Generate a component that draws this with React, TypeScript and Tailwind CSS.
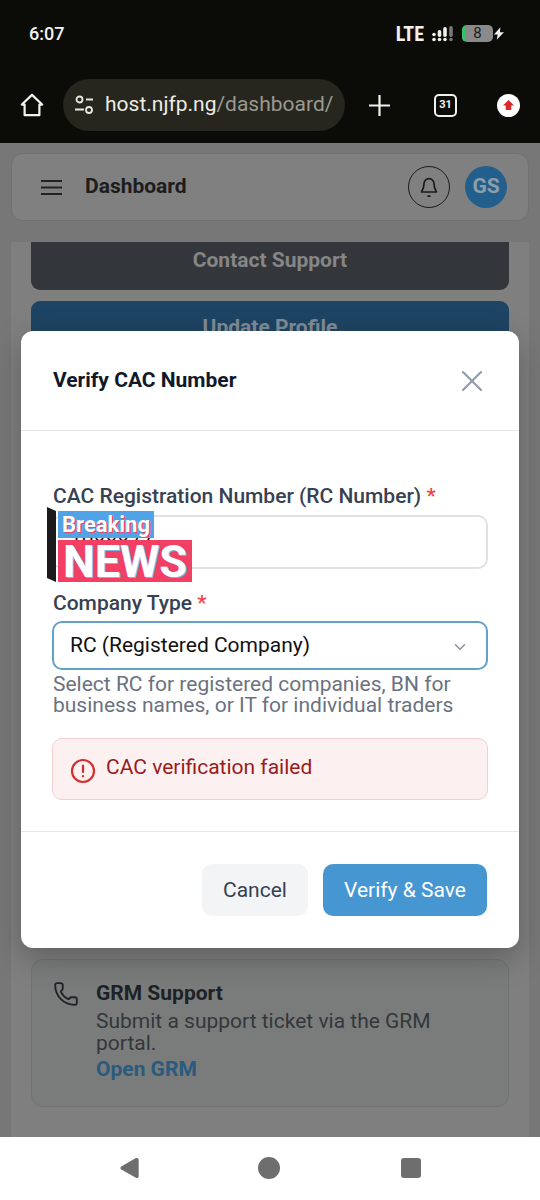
import { ChevronDown, Phone, X } from 'lucide-react'

const font = { fontFamily: 'Roboto, sans-serif' }

function StatusBar() {
  return (
    <div className="flex h-[66px] items-center justify-between pl-[29px] pr-[36px] pt-[1px] text-[#f2f2ec]">
      <span className="text-[18px] font-medium">6:07</span>
      <div className="flex items-center">
        <span className="text-[20px] font-bold [font-family:'Liberation_Sans_Narrow','Roboto_Condensed',Roboto,sans-serif]">LTE</span>
        <svg className="ml-[8px]" width="22" height="16" viewBox="0 0 22 16" fill="#f2f2ec">
          <circle cx="2" cy="13.500" r="1.800" />
          <circle cx="2" cy="8.500" r="1.800" />
          <circle cx="7.500" cy="13.500" r="1.800" />
          <rect x="5.700" y="4" width="3.600" height="7" rx="1.800" />
          <circle cx="13" cy="13.500" r="1.800" />
          <rect x="11.200" y="1" width="3.600" height="10" rx="1.800" />
          <circle cx="19" cy="13.500" r="1.800" fill="#777" />
          <rect x="17.200" y="0" width="3.600" height="11" rx="1.800" fill="#777" />
        </svg>
        <div className="relative ml-[8px] flex h-[17px] w-[31px] items-center justify-center overflow-hidden rounded-[5px] bg-[#8a8a8a]">
          <div className="absolute left-0 top-0 h-full w-[3px] bg-[#35c16a]" />
          <span className="text-[15px] leading-none text-[#1d1d1d]">8</span>
        </div>
        <svg className="ml-[1px]" width="10" height="13" viewBox="0 0 11 14" fill="#f2f2ec">
          <path d="M7 0 0 8h4l-1 6 8-8.500H6.500z" />
        </svg>
      </div>
    </div>
  )
}

function BrowserBar() {
  return (
    <div className="h-[77px] pl-[20px] pt-[13px]">
      <div className="flex h-[52px] items-center">
        <svg className="shrink-0" width="24" height="24" viewBox="0 0 26 26" fill="none" stroke="#f2f2ec" strokeWidth="2.400" strokeLinejoin="round">
          <path d="M2 12.500 13 2l11 10.500h-3V24H5V12.500z" />
        </svg>
        <div className="ml-[19px] flex h-[52px] w-[282px] shrink-0 items-center rounded-full bg-[#26261e] pl-[11px]">
          <svg className="shrink-0" width="20" height="20" viewBox="0 0 20 20" fill="none" stroke="#e8e8e0" strokeWidth="1.800">
            <circle cx="5.500" cy="4.500" r="3" />
            <path d="M12 4.500h7M1 14.500h9" />
            <circle cx="15" cy="15" r="3" />
          </svg>
          <span className="ml-[11px] whitespace-nowrap text-[21px] text-[#ecece4]">
            host.njfp.ng<span className="text-[#9a9a90]">/dashboard/</span>
          </span>
        </div>
        <svg className="ml-[24px] shrink-0" width="21" height="21" viewBox="0 0 21 21" stroke="#f2f2ec" strokeWidth="2.200" fill="none">
          <path d="M0 10.500h21M10.500 0v21" />
        </svg>
        <div className="ml-[44px] flex h-[23px] w-[23px] shrink-0 items-center justify-center rounded-[5px] border-2 border-[#f2f2ec] text-[11px] font-bold text-[#f2f2ec]">31</div>
        <div className="ml-[40px] flex h-[23px] w-[23px] shrink-0 items-center justify-center rounded-full bg-white">
          <svg width="13" height="12" viewBox="0 0 14 13" fill="#d92b2b">
            <path d="M7 1 1 7h3v5h6V7h3z" />
          </svg>
        </div>
      </div>
    </div>
  )
}

function DimmedPage() {
  return (
    <div className="relative flex h-[994px] flex-col overflow-hidden bg-[#777777]">
      <div className="flex flex-1 flex-col px-[11px] pt-[10px]">
        <div className="flex h-[68px] shrink-0 items-center rounded-[12px] border border-[#717171] bg-[#808080] pl-[29px] pr-[21px]">
          <svg width="21" height="17" viewBox="0 0 21 17" stroke="#222" strokeWidth="2" fill="none">
            <path d="M0 2h21M0 8.500h21M0 15h21" />
          </svg>
          <span className="ml-[23px] text-[21px] font-bold text-[#1d1d1d]">Dashboard</span>
          <div className="ml-auto flex h-[42px] w-[42px] items-center justify-center rounded-full border border-[#1c1c1c]">
            <svg width="20" height="22" viewBox="0 0 24 26" fill="none" stroke="#1a1a1a" strokeWidth="2" strokeLinecap="round" strokeLinejoin="round">
              <path d="M6 9a6 6 0 0 1 12 0c0 6 3 9 3 10H3c0-1 3-4 3-10zM11 24h2" />
            </svg>
          </div>
          <div className="ml-[15px] flex h-[42px] w-[42px] items-center justify-center rounded-full bg-[#235f8d] text-[21px] font-bold text-[#8e9ea8]">GS</div>
        </div>
        <div className="mt-[21px] flex flex-1 flex-col overflow-hidden bg-[#7f7f7f] px-[20px]">
          <div className="-mt-[12px] flex h-[60px] shrink-0 items-center justify-center rounded-[9px] bg-[#33363b] pt-[2px] text-[21px] font-bold text-[#868686]">Contact Support</div>
          <div className="mt-[11px] flex h-[54px] shrink-0 items-center justify-center rounded-[9px] bg-[#1e4463] text-[21px] font-bold text-[#7f8c95]">Update Profile</div>
          <div className="h-[604px] shrink-0" />
          <div className="flex h-[148px] shrink-0 rounded-[12px] border border-[#717372] bg-[#7a7c7b] pl-[21px] pt-[21px]">
            <Phone size={26} strokeWidth={1.700} className="shrink-0 text-[#202428]" />
            <div className="ml-[17px] flex flex-col">
              <span className="text-[21px] font-bold leading-[24px] text-[#1e2226]">GRM Support</span>
              <span className="mt-[5px] w-[360px] text-[21px] leading-[22px] text-[#33373b]">Submit a support ticket via the GRM portal.</span>
              <span className="mt-[3px] text-[21px] font-bold leading-[24px] text-[#2a5a7e]">Open GRM</span>
            </div>
          </div>
        </div>
      </div>
    </div>
  )
}

function NavBar() {
  return (
    <div className="flex h-[63px] items-center bg-white pb-[1px] pl-[119px]">
      <svg width="21" height="22" viewBox="0 0 22 24" fill="#6e6e6e">
        <path d="M19 1a2 2 0 0 1 2 2v18a2 2 0 0 1-3 1.700L2 13.700a2 2 0 0 1 0-3.400L18 1.200A2 2 0 0 1 19 1z" />
      </svg>
      <div className="ml-[118px] h-[22px] w-[22px] rounded-full bg-[#6e6e6e]" />
      <div className="ml-[121px] h-[20px] w-[20px] rounded-[3px] bg-[#6e6e6e]" />
    </div>
  )
}

function NewsBadge() {
  return (
    <div className="absolute left-[47px] top-[507px] flex h-[75px]">
      <svg width="11" height="75" viewBox="0 0 11 75" fill="#1c1a1c">
        <path d="M0 0 9 4v71l-9-4z" />
      </svg>
      <div className="flex flex-col items-start">
        <div className="mt-[4px] flex h-[27px] w-[96px] items-center bg-[#4fa3e6] pl-[4px] text-[22px] font-bold leading-none text-white [text-shadow:1.500px_1px_0_#e8456c]">Breaking</div>
        <div className="mt-[2px] flex h-[42px] w-[134px] items-center justify-center bg-[#f23f63] text-[45px] font-bold leading-none text-white [text-shadow:1.500px_1px_0_#7fb5e6]">NEWS</div>
      </div>
    </div>
  )
}

function VerifyModal() {
  return (
    <div className="absolute left-[21px] top-[331px] flex h-[617px] w-[498px] flex-col rounded-[12px] bg-white shadow-[0_10px_30px_rgba(0,0,0,0.25)]">
      <div className="flex h-[100px] shrink-0 items-center justify-between border-b border-[#e5e7eb] pl-[32px] pr-[29px]">
        <span className="text-[21px] font-bold text-[#111827]">Verify CAC Number</span>
        <X size={36} strokeWidth={1.400} className="text-[#8f9aa8]" />
      </div>
      <div className="flex-1 px-[31px] pt-[50px]">
        <div className="ml-[1px] whitespace-nowrap text-[21px] font-medium leading-[30px] text-[#374151]">
          CAC Registration Number (RC Number) <span className="text-[#ef4444]">*</span>
        </div>
        <div className="mt-[4px] flex h-[54px] items-center rounded-[10px] border-2 border-[#dfe1e5] pl-[16px] text-[21px] text-[#111]">1088877</div>
        <div className="ml-[1px] mt-[19px] text-[21px] font-medium leading-[30px] text-[#374151]">
          Company Type <span className="text-[#ef4444]">*</span>
        </div>
        <div className="mt-[3px] flex h-[49px] items-center justify-between rounded-[10px] border-2 border-[#64a0cc] pl-[16px] pr-[17px] text-[21px] text-[#111]">
          RC (Registered Company)
          <ChevronDown size={18} className="mt-[3px] text-[#8a929c]" />
        </div>
        <p className="ml-[1px] mt-[4px] text-[21px] leading-[21px] text-[#6b7280]">Select RC for registered companies, BN for business names, or IT for individual traders</p>
        <div className="mt-[22px] flex h-[62px] items-center rounded-[10px] border border-[#f3cfcf] bg-[#fdf0f0] pb-[3px] pl-[17px] text-[21px] text-[#991b1b]">
          <svg className="mt-[6px]" width="26" height="26" viewBox="0 0 26 26" fill="none" stroke="#d32f2f" strokeWidth="2.200" strokeLinecap="round">
            <circle cx="13" cy="13" r="11" />
            <path d="M13 7.500v6.500M13 18v.200" />
          </svg>
          <span className="ml-[10px]">CAC verification failed</span>
        </div>
      </div>
      <div className="flex h-[117px] shrink-0 items-center justify-end gap-[15px] border-t border-[#e5e7eb] pr-[32px] text-[21px]">
        <div className="flex h-[52px] w-[106px] items-center justify-center rounded-[10px] bg-[#f3f4f6] pt-[1px] text-[#374151]">Cancel</div>
        <div className="flex h-[52px] w-[164px] items-center justify-center rounded-[10px] bg-[#4696d2] pt-[1px] text-white">Verify &amp; Save</div>
      </div>
    </div>
  )
}

export default function App() {
  return (
    <div style={font} className="relative h-[1200px] w-[540px] overflow-hidden">
      <div className="bg-[#0b0b07]">
        <StatusBar />
        <BrowserBar />
      </div>
      <DimmedPage />
      <NavBar />
      <VerifyModal />
      <NewsBadge />
    </div>
  )
}
